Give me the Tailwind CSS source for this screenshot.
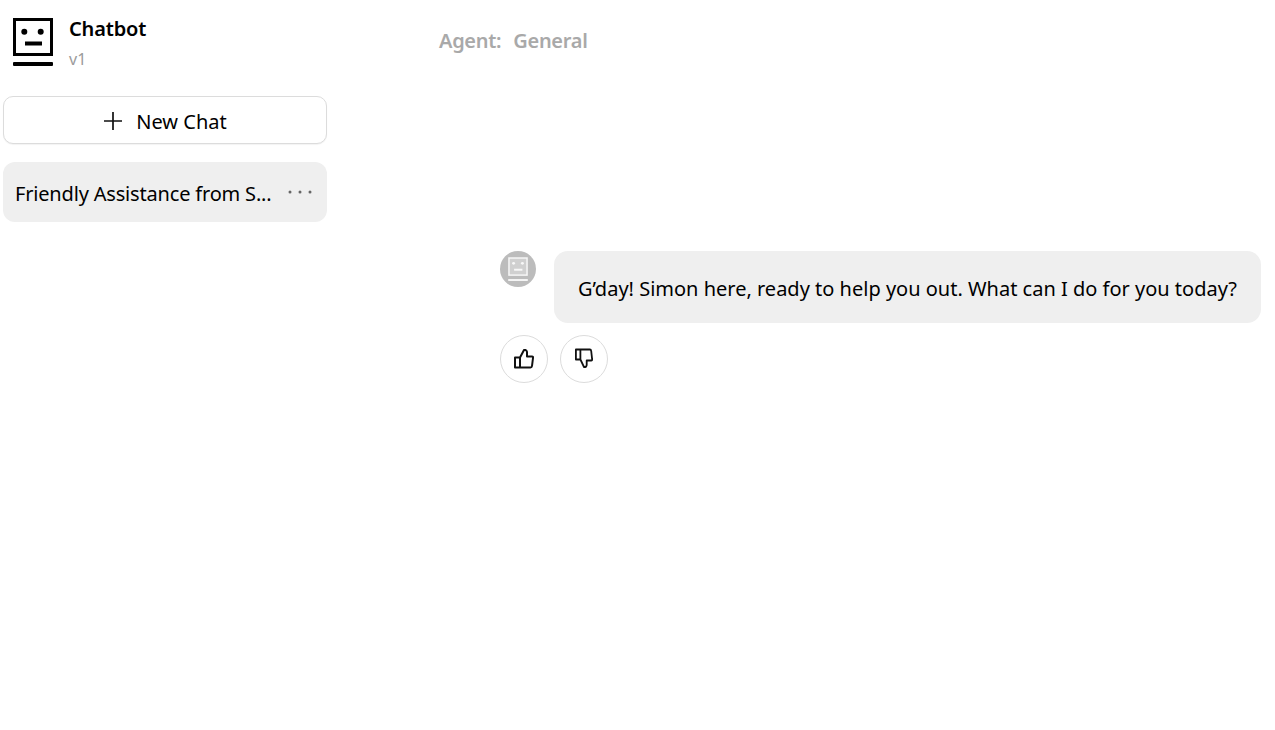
<!DOCTYPE html>
<html lang="en">
  <head>
    <meta charset="UTF-8" />
    <meta name="viewport" content="width=device-width, initial-scale=1.0" />
    <title>Chatbot</title>
    <script src="https://cdn.jsdelivr.net/npm/@tailwindcss/browser@4"></script>
  </head>
  <body class="bg-white font-['Noto_Sans',sans-serif] text-black overflow-hidden">
    <div class="flex h-[730px] w-[1275px]">
      <!-- sidebar -->
      <aside class="w-[330px] shrink-0 pl-[3px] pr-[3px]">
        <div class="flex h-[96px] pl-[10px] pt-[17px]">
          <svg class="w-[40px] h-[49px] shrink-0" viewBox="0 0 40 49">
            <rect x="1.5" y="2.5" width="37" height="35" fill="none" stroke="#000" stroke-width="3" />
            <circle cx="11.3" cy="14.7" r="3" fill="#000" />
            <circle cx="27.7" cy="14.7" r="3" fill="#000" />
            <rect x="12" y="24.5" width="17" height="4" fill="#000" />
            <rect x="0" y="45" width="40" height="4" rx="1" fill="#000" />
          </svg>
          <div class="ml-[16px] -mt-[2px]">
            <div class="text-[20px] leading-[28px] font-semibold tracking-[-0.15px]">Chatbot</div>
            <div class="text-[16px] leading-[22px] mt-[5px] text-[#9b9b9b]">v1</div>
          </div>
        </div>
        <button class="w-[324px] h-[48px] flex items-center justify-center gap-[13px] bg-white border border-[#dcdcdc] rounded-[10px] shadow-[0_1px_1px_rgba(0,0,0,0.05)] text-[20px]">
          <svg class="w-[20px] h-[20px] mt-[1px]" viewBox="0 0 20 20" fill="none" stroke="#111" stroke-width="1.7">
            <path d="M10 1v18M1 10h18" />
          </svg>
          <span class="pt-[4px]">New Chat</span>
        </button>
        <div class="w-[324px] h-[60px] mt-[18px] flex items-center justify-between bg-[#efefef] rounded-[12px] pl-[12px] pr-[15px]">
          <span class="pt-[4px] text-[20px] whitespace-nowrap tracking-[-0.18px]">Friendly Assistance from S...</span>
          <svg class="w-[24px] h-[4px] shrink-0" viewBox="0 0 24 4" fill="#666">
            <circle cx="2" cy="2" r="1.5" />
            <circle cx="12" cy="2" r="1.5" />
            <circle cx="22" cy="2" r="1.5" />
          </svg>
        </div>
      </aside>
      <!-- main -->
      <main class="flex-1 relative">
        <div class="pl-[109px] pt-[26px] h-[251px] flex gap-[12px] text-[20px] leading-[30px] font-semibold text-[#a9a9a9] tracking-[-0.3px]">
          <span>Agent:</span>
          <span>General</span>
        </div>
        <div class="flex pl-[170px]">
          <div class="w-[36px] h-[36px] rounded-full bg-[#bcbcbc] flex items-center justify-center shrink-0">
            <svg class="w-[22px] h-[24px]" viewBox="0 0 40 49">
              <rect x="1.5" y="2" width="37" height="35" fill="#fff" fill-opacity="0.3" stroke="#fff" stroke-width="3" stroke-opacity="0.85" />
              <circle cx="11" cy="13" r="3" fill="#fff" opacity="0.85" />
              <circle cx="29" cy="13" r="3" fill="#fff" opacity="0.85" />
              <rect x="12" y="24" width="17" height="4" fill="#fff" opacity="0.85" />
              <rect x="0" y="45" width="40" height="4" fill="#fff" opacity="0.85" />
            </svg>
          </div>
          <div>
            <div class="ml-[18px] w-[707px] h-[72px] pt-[4px] bg-[#efefef] rounded-[14px] flex items-center pl-[24px] text-[20px] whitespace-nowrap">G’day! Simon here, ready to help you out. What can I do for you today?</div>
          </div>
        </div>
        <div class="flex gap-[12px] pl-[170px] mt-[12px]">
          <button class="w-[48px] h-[48px] rounded-full border border-[#dcdcdc] bg-white flex items-center justify-center">
            <svg class="w-[20px] h-[20px]" viewBox="0 0 20 20" fill="none" stroke="#111" stroke-width="2" stroke-linejoin="round" stroke-linecap="round">
              <path d="M6 8.5 10 1q2.5-.5 3 2v4.5h5q1.3 0 1 1.5l-1 8q-.2 1.5-1.5 1.5H1v-10h5v10" />
            </svg>
          </button>
          <button class="w-[48px] h-[48px] rounded-full border border-[#dcdcdc] bg-white flex items-center justify-center">
            <svg class="w-[18px] h-[20px] -mt-[2px] -scale-y-100" viewBox="0 0 20 20" preserveAspectRatio="none" fill="none" stroke="#111" stroke-width="2" stroke-linejoin="round" stroke-linecap="round">
              <path d="M6 8.5 10 1q2.5-.5 3 2v4.5h5q1.3 0 1 1.5l-1 8q-.2 1.5-1.5 1.5H1v-10h5v10" />
            </svg>
          </button>
        </div>
      </main>
    </div>
  </body>
</html>
